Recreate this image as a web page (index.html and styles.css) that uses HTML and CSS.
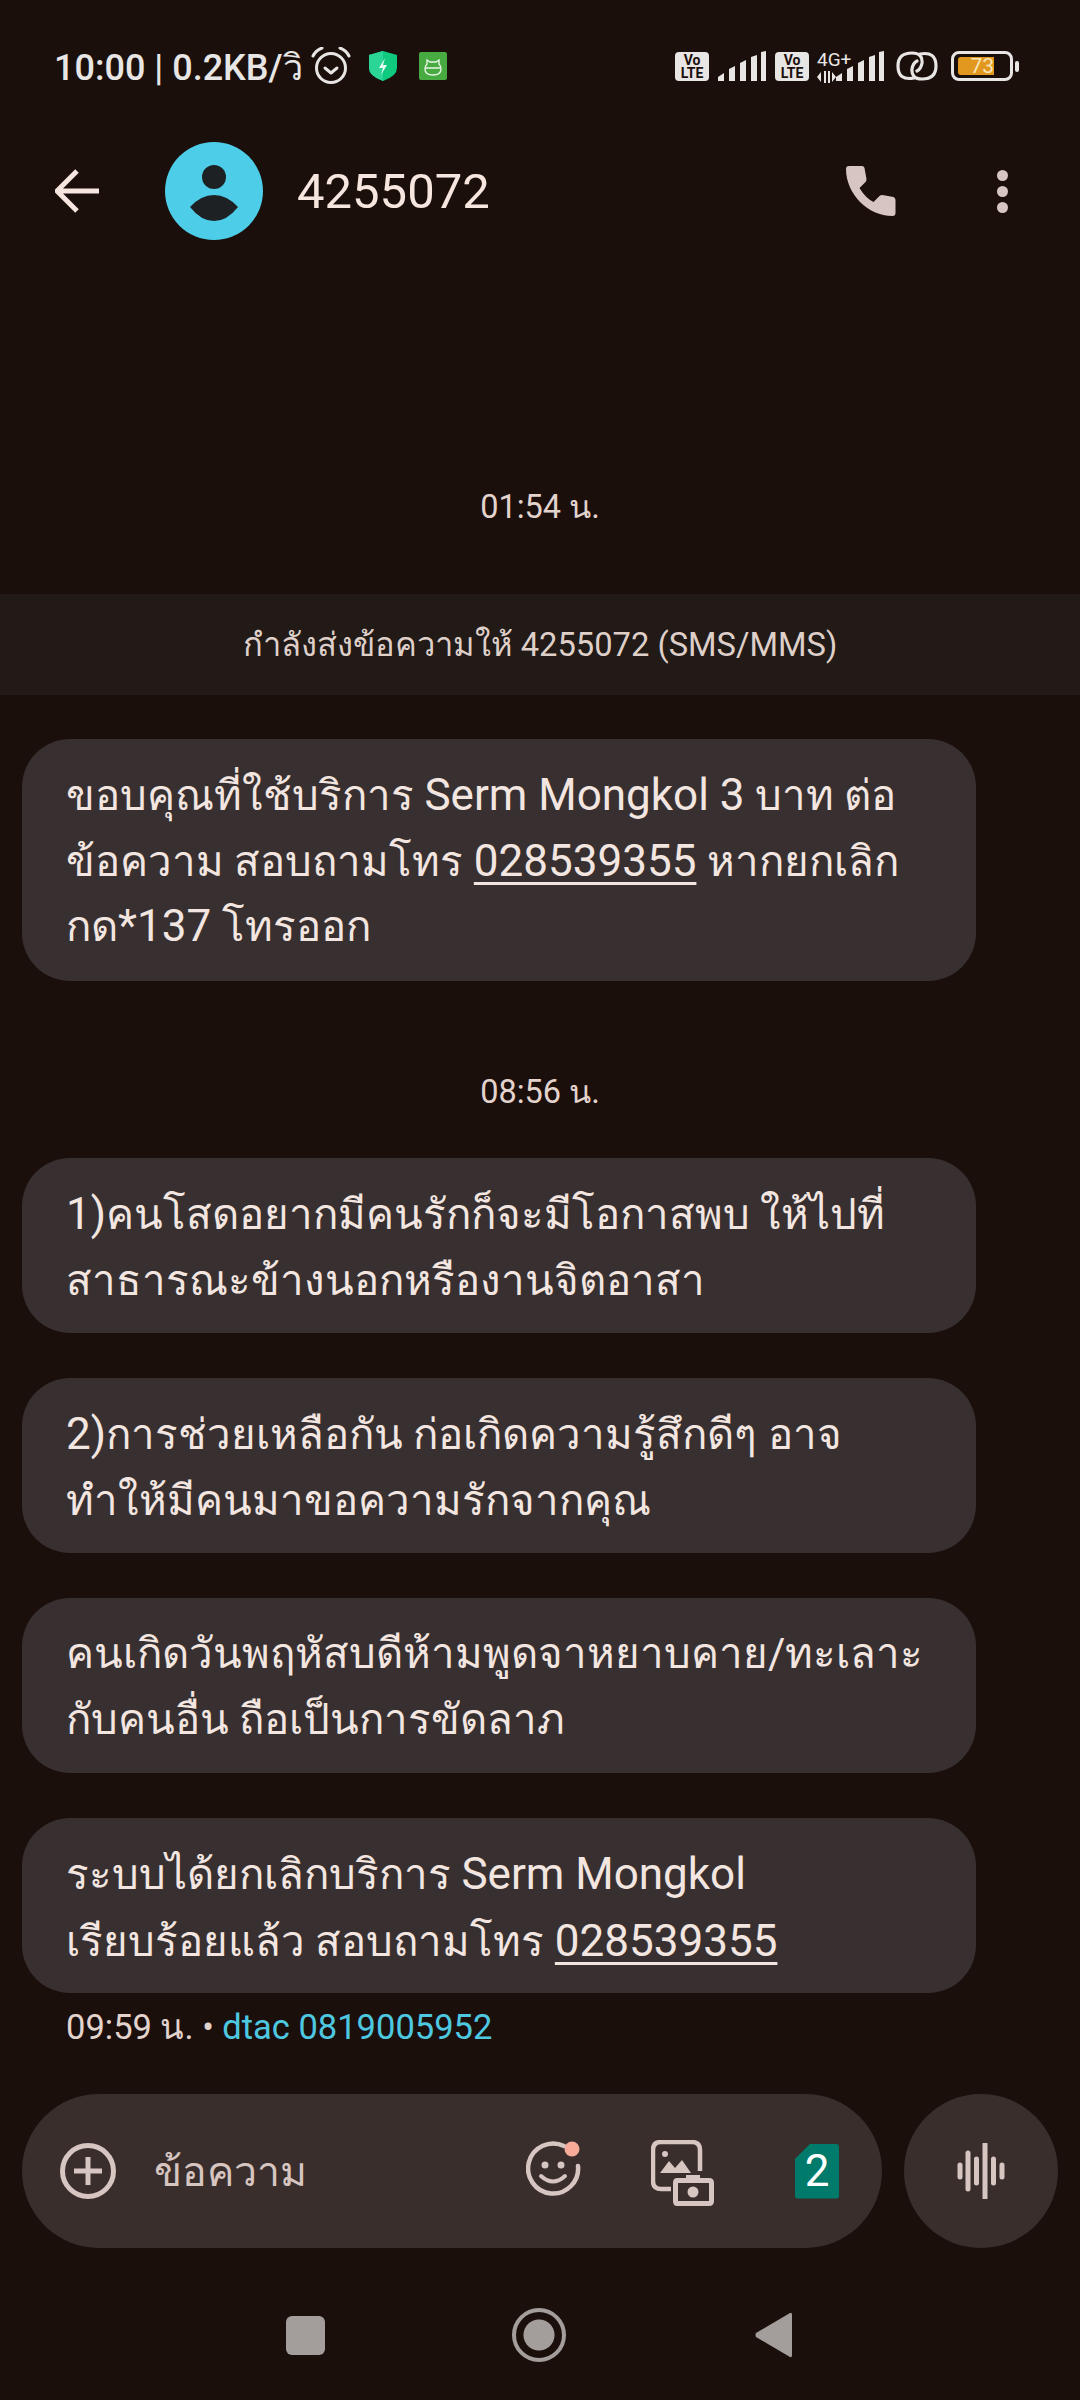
FILE: index.html
```html
<!DOCTYPE html>
<html lang="th">
<head>
  <meta charset="UTF-8">
  <meta name="viewport" content="width=device-width, initial-scale=1.0">
  <title>4255072</title>
  <link rel="stylesheet" href="styles.css">
</head>
<body>
  <div class="screen">
    <div class="status-bar">
      <span class="status-text">10:00 | 0.2KB/วิ</span>
      <svg class="ic-alarm" viewBox="0 0 40 38" width="40" height="38"><circle cx="20" cy="21" r="14.5" fill="none" stroke="#e8e6e5" stroke-width="3"/><path d="M14 21l6 5 6-5" fill="none" stroke="#e8e6e5" stroke-width="3" stroke-linecap="round" stroke-linejoin="round"/><path d="M2 9Q5 3 11 1M38 9Q35 3 29 1" fill="none" stroke="#e8e6e5" stroke-width="3" stroke-linecap="round"/></svg>
      <svg class="ic-shield" viewBox="0 0 28 30" width="28" height="30"><path d="M14 0l14 4v13q0 8-14 13Q0 25 0 17V4z" fill="#0fc97e"/><path d="M14 0L0 4v13q0 8 14 13z" fill="#2bd596"/><path d="M16 7l-6 10h4l-2 7 6-10h-4z" fill="#e6fbf2"/></svg>
      <svg class="ic-bot" viewBox="0 0 28 28" width="28" height="28"><rect width="28" height="28" rx="2" fill="#47ab41"/><path d="M8 12V8l3 2h6l3-2v4q2 2 2 5 0 6-8 6t-8-6q0-3 2-5zM6 16h16" fill="none" stroke="#e6f5e4" stroke-width="1.4"/></svg>
      <div class="status-right">
        <span class="volte">Vo<br>LTE</span>
        <svg class="signal" viewBox="0 0 48 30" width="48" height="30"><path d="M0 30v-4l6-4v8zM11 30V18l6-3v15zM22 30V12l6-3v21zM33 30V6l6-2v26zM43 30V1l5-1v30z" fill="#e8e6e5"/></svg>
        <span class="volte">Vo<br>LTE</span>
        <div class="net">
          <span class="net-label">4G+</span>
          <svg viewBox="0 0 19 12" width="19" height="12"><path d="M0 6l4-5v10zM7 0h2v12H7zM11 0h2v12h-2zM15 1l4 5-4 5z" fill="#e8e6e5"/></svg>
        </div>
        <svg class="signal small" viewBox="0 0 48 30" width="48" height="30"><path d="M0 30v-4l6-4v8zM11 30V18l6-3v15zM22 30V12l6-3v21zM33 30V6l6-2v26zM43 30V1l5-1v30z" fill="#e8e6e5"/></svg>
        <svg class="ic-link" viewBox="0 0 42 30" width="42" height="30"><path d="M18 27Q2 30 2 15 2 2 16 2q11 0 10 10-1 6-5 8M24 3q16-3 16 12 0 13-14 13-11 0-10-10 1-6 5-8" fill="none" stroke="#e8e6e5" stroke-width="3.2" stroke-linecap="round"/></svg>
        <div class="battery">
          <div class="battery-body"><span class="battery-fill">73</span></div>
          <span class="battery-nub"></span>
        </div>
      </div>
    </div>

    <header class="app-bar">
      <svg class="back" viewBox="0 0 44 44" width="44" height="44"><path d="M2 22h42M22 2L2 22l20 20" fill="none" stroke="#f7e6df" stroke-width="5"/></svg>
      <svg class="avatar" viewBox="0 0 98 98" width="98" height="98"><circle cx="49" cy="49" r="49" fill="#4dcde8"/><circle cx="49" cy="35" r="12" fill="#1e2124"/><path d="M25 65Q36 53 49 53t24 12Q62 79 49 79T25 65z" fill="#1e2124"/></svg>
      <h1 class="title">4255072</h1>
      <svg class="ic-phone" viewBox="0 0 50 50" width="50" height="50"><path d="M3 0h13q2 0 2.500 2l2 11q0 2-1 3l-6 6q6 10 14 14l6-6q1-1 3-1l11 2q2 1 2 3v13q0 3-3 3C22 50 0 28 0 3q0-3 3-3z" fill="#d6c5c0"/></svg>
      <div class="kebab"><i></i><i></i><i></i></div>
    </header>

    <main class="thread">
      <p class="stamp first">01:54 น.</p>
      <p class="banner">กำลังส่งข้อความให้ 4255072 (SMS/MMS)</p>

      <div class="bubble tall">ขอบคุณที่ใช้บริการ <span class="lat">Serm Mongkol 3</span> บาท ต่อ<br>ข้อความ สอบถามโทร <u class="lat">028539355</u> หากยกเลิก<br>กด<span class="lat">*137</span> โทรออก</div>

      <p class="stamp second">08:56 น.</p>

      <div class="bubble"><span class="lat">1)</span>คนโสดอยากมีคนรักก็จะมีโอกาสพบ ให้ไปที่<br>สาธารณะข้างนอกหรืองานจิตอาสา</div>
      <div class="bubble"><span class="lat">2)</span>การช่วยเหลือกัน ก่อเกิดความรู้สึกดีๆ อาจ<br>ทำให้มีคนมาขอความรักจากคุณ</div>
      <div class="bubble">คนเกิดวันพฤหัสบดีห้ามพูดจาหยาบคาย/ทะเลาะ<br>กับคนอื่น ถือเป็นการขัดลาภ</div>
      <div class="bubble">ระบบได้ยกเลิกบริการ <span class="lat">Serm Mongkol</span><br>เรียบร้อยแล้ว สอบถามโทร <u class="lat">028539355</u></div>
      <p class="meta">09:59 น. • <span class="carrier">dtac 0819005952</span></p>
    </main>

    <div class="composer">
      <div class="input-pill">
        <svg class="ic-plus" viewBox="0 0 56 56" width="56" height="56"><circle cx="28" cy="28" r="25.500" fill="none" stroke="#d6c5c0" stroke-width="5"/><path d="M14 28h28M28 14v28" stroke="#d6c5c0" stroke-width="5"/></svg>
        <span class="placeholder">ข้อความ</span>
        <svg class="ic-emoji" viewBox="0 0 58 58" width="58" height="58"><path d="M38 6A25 25 0 1 0 52 26" fill="none" stroke="#d6c5c0" stroke-width="4.500" stroke-linecap="round"/><circle cx="19" cy="25" r="3.500" fill="#d6c5c0"/><circle cx="35" cy="25" r="3.500" fill="#d6c5c0"/><path d="M15 36q12 11 24 0" fill="none" stroke="#d6c5c0" stroke-width="4" stroke-linecap="round"/><circle cx="46" cy="9" r="7.500" fill="#f9ab9a"/></svg>
        <svg class="ic-gallery" viewBox="0 0 64 66" width="64" height="66"><path d="M20 49H10q-8 0-8-8V10q0-8 8-8h31q8 0 8 8v21" fill="none" stroke="#d6c5c0" stroke-width="4.500"/><circle cx="14" cy="14" r="3" fill="#d6c5c0"/><path d="M9 33l9-12 6 7 7-8 9 13z" fill="#d6c5c0"/><path d="M26 38h9v-3h14v3h9q5 0 5 5v18q0 5-5 5H26q-4 0-4-5V43q0-5 4-5z" fill="#d6c5c0"/><rect x="27" y="43" width="31" height="18" fill="#3a2e2c"/><circle cx="42" cy="52" r="5.500" fill="#d6c5c0"/></svg>
        <div class="sim">2</div>
      </div>
      <div class="mic">
        <svg viewBox="0 0 48 56" width="48" height="56"><path d="M3 22v12M11 10v36M19.500 16v24M28 1v54M36.500 16v24M45 22v12" stroke="#d6c5c0" stroke-width="5" stroke-linecap="round"/></svg>
      </div>
    </div>

    <nav class="nav-bar">
      <span class="nav-square"></span>
      <span class="nav-home"></span>
      <svg class="nav-back" viewBox="0 0 37 46" width="37" height="46"><path d="M35 1q2-1 2 2v40q0 3-2 2L1 25q-1-2 0-4z" fill="#a39e9b"/></svg>
    </nav>
  </div>
</body>
</html>
```

FILE: styles.css
```css
* {
  box-sizing: border-box;
}
body {
  margin: 0;
  background: #1b0f0c;
  font-family: Roboto, "Noto Sans", sans-serif;
  color: #f3e6e1;
}
p, h1 {
  margin: 0;
}
.screen {
  width: 1080px;
  height: 2400px;
  overflow: hidden;
}

/* status bar */
.status-bar {
  display: flex;
  align-items: center;
  height: 132px;
  padding-left: 54px;
}
.status-text {
  padding-top: 2px;
  font-size: 36px;
  font-weight: 500;
  color: #e8e6e5;
  width: 257px;
  white-space: nowrap;
}
.ic-shield {
  margin-left: 18px;
}
.ic-bot {
  margin-left: 22px;
}
.status-right {
  display: flex;
  align-items: center;
  margin-left: 228px;
}
.volte {
  width: 34px;
  height: 29px;
  border-radius: 4px;
  background: #e8e6e5;
  color: #1b0f0c;
  font-size: 14px;
  font-weight: 700;
  line-height: 13px;
  text-align: center;
  padding-top: 2px;
}
.signal {
  margin: 0 9px;
}
.net {
  display: flex;
  flex-direction: column;
  align-items: flex-start;
  gap: 2px;
  width: 19px;
  margin-left: 8px;
}
.net-label {
  font-size: 19px;
  line-height: 19px;
  color: #e8e6e5;
  white-space: nowrap;
}
.signal.small {
  margin: 0 12px 0 0;
}
.battery {
  display: flex;
  align-items: center;
  margin-left: 13px;
  gap: 2px;
}
.battery-body {
  width: 62px;
  height: 30px;
  border: 3px solid #e8e6e5;
  border-radius: 8px;
  padding: 3px 4px;
}
.battery-fill {
  display: block;
  width: 36px;
  height: 18px;
  background: #e2981f;
  border-radius: 3px 0 0 3px;
  color: #f9e6b8;
  font-size: 21px;
  line-height: 18px;
  text-align: right;
}
.battery-nub {
  width: 4px;
  height: 11px;
  background: #e8e6e5;
  border-radius: 2px;
}

/* app bar */
.app-bar {
  display: flex;
  align-items: center;
  height: 118px;
  padding-left: 55px;
}
.avatar {
  margin-left: 66px;
}
.title {
  margin-left: 34px;
  width: 549px;
  font-size: 49px;
  font-weight: 400;
  color: #f7e6df;
}
.kebab {
  display: flex;
  flex-direction: column;
  gap: 5px;
  margin-left: 101px;
}
.kebab i {
  display: block;
  width: 11px;
  height: 11px;
  border-radius: 50%;
  background: #d6c5c0;
}

/* messages */
.stamp {
  text-align: center;
  font-size: 32.500px;
  line-height: 40px;
  color: #e3d3cd;
}
.stamp.first {
  padding-top: 237px;
  margin-bottom: -1px;
}
.stamp.second {
  margin-top: 91px;
  margin-bottom: 46px;
}
.banner {
  height: 101px;
  margin-top: 68px;
  margin-bottom: 44px;
  background: #211a17;
  font-size: 32.700px;
  line-height: 103px;
  text-align: center;
  color: #dfcfc9;
}
.bubble {
  width: 954px;
  height: 175px;
  margin: 0 0 45px 22px;
  padding: 23px 44px 0;
  background: #383030;
  border-radius: 48px;
  font-size: 42px;
  line-height: 66px;
  white-space: nowrap;
}
.bubble .lat {
  font-size: 44px;
}
.bubble.tall {
  height: 242px;
  margin-bottom: 0;
  padding-top: 24px;
  line-height: 65.500px;
}
.bubble u {
  text-underline-offset: 6px;
  text-decoration-thickness: 3px;
}
.thread .bubble:nth-last-child(2) {
  margin-bottom: 12px;
}
.meta {
  padding-left: 66px;
  padding-top: 1px;
  font-size: 34.500px;
  line-height: 42px;
  color: #e3d3cd;
}
.carrier {
  color: #4dc8e0;
}

/* composer */
.composer {
  display: flex;
  gap: 22px;
  margin: 46px 22px 0;
}
.input-pill {
  display: flex;
  align-items: center;
  width: 860px;
  height: 154px;
  padding-left: 38px;
  background: #3a2e2c;
  border-radius: 77px;
}
.placeholder {
  width: 372px;
  margin-left: 38px;
  font-size: 41px;
  color: #d6c5c0;
}
.ic-emoji {
  margin-top: -4px;
}
.ic-gallery {
  margin-left: 67px;
  margin-top: 4px;
}
.sim {
  width: 44px;
  height: 55px;
  margin-left: 80px;
  background: #007a6b;
  border-radius: 3px;
  clip-path: polygon(35% 0, 100% 0, 100% 100%, 0 100%, 0 28%);
  color: #fff;
  font-size: 44px;
  line-height: 55px;
  text-align: center;
}
.mic {
  display: flex;
  align-items: center;
  justify-content: center;
  width: 154px;
  height: 154px;
  background: #3a2e2c;
  border-radius: 50%;
}

/* bottom nav */
.nav-bar {
  display: flex;
  align-items: center;
  height: 46px;
  margin-top: 64px;
  padding-left: 286px;
}
.nav-square {
  width: 39px;
  height: 39px;
  background: #a39e9b;
  border-radius: 6px;
}
.nav-home {
  width: 54px;
  height: 54px;
  margin-left: 187px;
  border: 4px solid #a39e9b;
  border-radius: 50%;
  background: radial-gradient(circle, #a39e9b 0 15px, #1b0f0c 16px);
}
.nav-back {
  margin-left: 189px;
}
```
